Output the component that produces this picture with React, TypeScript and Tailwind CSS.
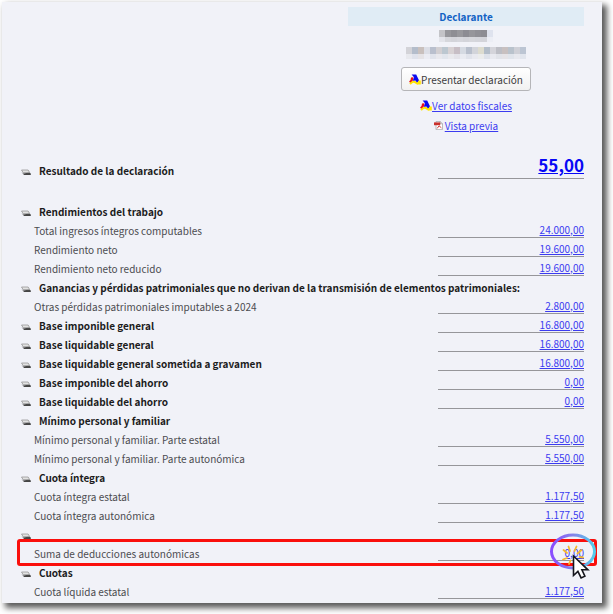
import type { ReactNode } from 'react'

type Row = {
  label: string
  value?: string
  heading?: boolean
  highlighted?: boolean
}

const rows: Row[] = [
  { label: 'Rendimientos del trabajo', heading: true },
  { label: 'Total ingresos íntegros computables', value: '24.000,00' },
  { label: 'Rendimiento neto', value: '19.600,00' },
  { label: 'Rendimiento neto reducido', value: '19.600,00' },
  {
    label:
      'Ganancias y pérdidas patrimoniales que no derivan de la transmisión de elementos patrimoniales:',
    heading: true,
  },
  { label: 'Otras pérdidas patrimoniales imputables a 2024', value: '2.800,00' },
  { label: 'Base imponible general', value: '16.800,00', heading: true },
  { label: 'Base liquidable general', value: '16.800,00', heading: true },
  { label: 'Base liquidable general sometida a gravamen', value: '16.800,00', heading: true },
  { label: 'Base imponible del ahorro', value: '0,00', heading: true },
  { label: 'Base liquidable del ahorro', value: '0,00', heading: true },
  { label: 'Mínimo personal y familiar', heading: true },
  { label: 'Mínimo personal y familiar. Parte estatal', value: '5.550,00' },
  { label: 'Mínimo personal y familiar. Parte autonómica', value: '5.550,00' },
  { label: 'Cuota íntegra', heading: true },
  { label: 'Cuota íntegra estatal', value: '1.177,50' },
  { label: 'Cuota íntegra autonómica', value: '1.177,50' },
  { label: '', heading: true },
  { label: 'Suma de deducciones autonómicas', value: '0,00', highlighted: true },
  { label: 'Cuotas', heading: true },
  { label: 'Cuota líquida estatal', value: '1.177,50' },
]

// Redacted taxpayer data, drawn as two lines of coloured tiles
const nameTiles = ['bg-[#c4c4c8]', 'bg-[#97979c]', 'bg-[#8e8e94]', 'bg-[#98989d]', 'bg-[#8c8c93]', 'bg-[#96969b]', 'bg-[#909096]', 'bg-[#8d8d93]', 'bg-[#dfe3ee]']
const idTiles = [
  'bg-[#d3d3d8]', 'bg-[#b4bdcb]', 'bg-[#c9c0bd]', 'bg-[#dcdee6]', 'bg-[#b9bfcd]',
  'bg-[#d2cfd2]', 'bg-[#bcc7d0]', 'bg-[#d8d2d4]', 'bg-[#c7bec5]', 'bg-[#d5dae2]',
  'bg-[#b8bfcc]', 'bg-[#d2d4da]', 'bg-[#dddccf]', 'bg-[#b3bdc9]', 'bg-[#d4d4da]',
  'bg-[#bdbec5]', 'bg-[#c8c0c0]', 'bg-[#b9c2cc]', 'bg-[#cfd0d7]', 'bg-[#bcc5d3]',
]

function Tiles({ colors }: { colors: string[] }) {
  return (
    <div className="flex" aria-hidden="true">
      {colors.map((color, i) => (
        <div key={i} className={`flex h-3 w-[6px] items-end ${color}`}>
          <div className="h-[5px] w-full bg-[#f1f2f8]/70" />
        </div>
      ))}
    </div>
  )
}

function AgencyIcon() {
  return (
    <svg width="12" height="11" viewBox="0 0 12 11" className="shrink-0" aria-hidden="true">
      <path d="M3.2 3.4Q3.4 6.4.8 8.4" stroke="#e8101c" strokeWidth="2.4" fill="none" />
      <path d="M1 10Q3.6 7 5.8 8T9 10" stroke="#ffe600" strokeWidth="2" fill="none" />
      <path d="M2.6.4h4.6L10.2 6.8 8 8.6 6.4 6.6 3.8 6.8 5 3.2Z" fill="#0a0af0" />
      <path d="M9.4 6.6h2.4v3.8H8Z" fill="#ffe600" />
    </svg>
  )
}

function PdfIcon() {
  return (
    <svg width="9" height="9" viewBox="0 0 9 9" className="shrink-0" aria-hidden="true">
      <path d="M2 .5h4.2L8.5 2.6v6H2Z" fill="#fff" stroke="#a9a9ad" strokeWidth=".8" />
      <path d="M6 .4v2.4h2.5" fill="#ddd" stroke="#999" strokeWidth=".6" />
      <path d="M0 1.4h6.2v2.8H0Z" fill="#c9302c" />
      <path d="M3.2 7.4 5 4.8l2.4 2" stroke="#c9302c" strokeWidth=".9" fill="none" />
    </svg>
  )
}

function BulletIcon() {
  return (
    <svg width="10" height="7" viewBox="0 0 10 7" className="mt-[3px] shrink-0" aria-hidden="true">
      <path d="M.6 3 2.4 4.4 8.2 3.4 9.8 4.4V6H3Z" fill="#454545" />
      <path d="M.5 1h6.6l1.6 2.6H2.2Z" fill="#e2e2e2" stroke="#8c8c8c" strokeWidth=".7" />
    </svg>
  )
}

function ClickMarker() {
  return (
    <svg
      width="48"
      height="50"
      viewBox="0 0 48 50"
      fill="none"
      className="pointer-events-none absolute -top-[11px] -right-[13px]"
      aria-hidden="true"
    >
      <defs>
        <linearGradient id="ring" x1="0" y1="0" x2="1" y2="0">
          <stop offset="0" stopColor="#8a4dff" />
          <stop offset=".5" stopColor="#8583e8" />
          <stop offset="1" stopColor="#52cdeb" />
        </linearGradient>
      </defs>
      <ellipse cx="24" cy="18.5" rx="21.5" ry="16.5" stroke="url(#ring)" strokeWidth="3" />
      <g stroke="#f5b82e" strokeWidth="1.8" strokeLinecap="round">
        <path d="M19.5 13.5 21 18M27.5 13.5 25.5 18M14.5 17 18 20M32.5 17 28.5 20.5M14 26.5 18 25M30.5 24 34 24.5M20 31 21.5 27.5" />
      </g>
      <path
        d="M24.5 23v19.5l4.4-4.2 3.2 6.6 3.8-1.7-3-6.4h6Z"
        fill="#fff"
        stroke="#15151c"
        strokeWidth="1.6"
      />
    </svg>
  )
}

function Amount({ children }: { children: ReactNode }) {
  return (
    <div className="flex h-[17px] items-end justify-end border-b border-[#96969a]">
      <a href="#" className="leading-[14px] text-[#3c3cf0] underline">
        {children}
      </a>
    </div>
  )
}

function SummaryRow({ label, value, heading, highlighted }: Row) {
  return (
    <tr className="relative h-[19px]">
      <th
        scope="row"
        colSpan={value ? 1 : 2}
        className="p-0 text-left align-middle leading-[18px] font-normal whitespace-nowrap"
      >
        {heading ? (
          <span className="flex h-[18px] items-center gap-2 pl-1 font-bold text-[#1c1c1c]">
            <BulletIcon />
            {label}
          </span>
        ) : (
          <span className="block pl-[17px] text-[#4c4c50]">{label}</span>
        )}
      </th>
      {value && (
        <td className="w-[146px] p-0 align-top">
          <Amount>{value}</Amount>
          {highlighted && (
            <>
              <div className="pointer-events-none absolute -top-[5px] -right-[13px] -bottom-[3px] left-0 rounded-[3px] border-3 border-[#fa0f0c]" />
              <ClickMarker />
            </>
          )}
        </td>
      )}
    </tr>
  )
}

export default function App() {
  return (
    <div className="bg-white pt-[2px] pr-[11px] pb-[11px] pl-[2px] font-['Noto_Sans_CJK_SC','Open_Sans',sans-serif] text-[10px]">
      <main className="bg-[#f1f2f8] pt-[5px] pr-[18px] pb-[2px] pl-[15px] shadow-[4px_4px_6px_1px_rgba(0,0,0,0.65)]">
        <section className="ml-auto flex w-[236px] flex-col items-center">
          <h1 className="w-full bg-[#e0ecf5] text-center leading-[19px] font-bold text-[#1262c4]">
            Declarante
          </h1>
          <div className="mt-1 flex flex-col items-center gap-[5px]">
            <Tiles colors={nameTiles} />
            <Tiles colors={idTiles} />
          </div>
          <button
            type="button"
            className="mt-2 flex h-6 items-center rounded-[3px] border border-[#b5b5b8] bg-linear-to-b from-white to-[#f1f1f1] px-[7px] text-[#3c3c3c]"
          >
            <AgencyIcon />
            Presentar declaración
          </button>
          <a href="#" className="mt-1 flex h-5 items-center text-[#3c3cf0]">
            <AgencyIcon />
            <span className="underline">Ver datos fiscales</span>
          </a>
          <a href="#" className="flex h-5 items-center gap-[2px] text-[#3c3cf0]">
            <PdfIcon />
            <span className="underline">Vista previa</span>
          </a>
        </section>

        <table className="mt-[17px] w-full border-collapse">
          <tbody>
            <tr className="h-[50px]">
              <th scope="row" className="p-0 pt-[10px] text-left align-top leading-[18px]">
                <span className="flex items-center gap-2 pl-1 text-[#1c1c1c]">
                  <BulletIcon />
                  Resultado de la declaración
                </span>
              </th>
              <td className="w-[146px] p-0 align-top">
                <div className="flex h-[27px] items-end justify-end border-b border-[#96969a]">
                  <a href="#" className="text-[17px] leading-[26px] font-bold text-[#0808f5] underline">
                    55,00
                  </a>
                </div>
              </td>
            </tr>
            {rows.map((row, i) => (
              <SummaryRow key={i} {...row} />
            ))}
          </tbody>
        </table>
      </main>
    </div>
  )
}
